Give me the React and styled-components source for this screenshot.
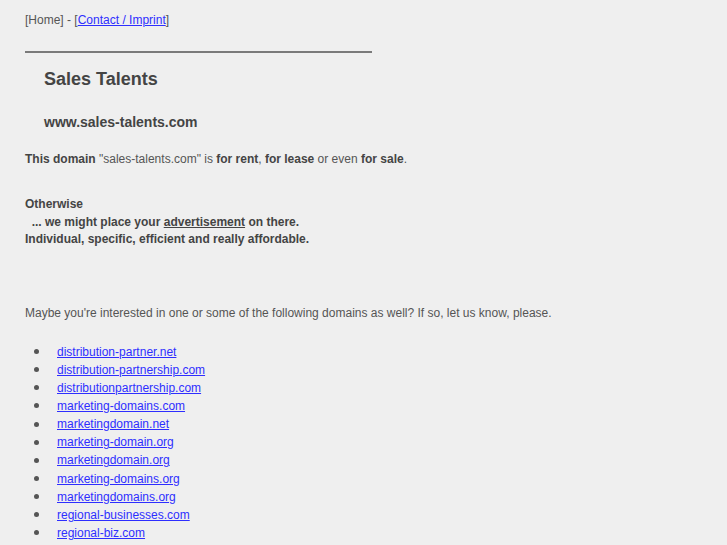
import React from "react";
import styled, { createGlobalStyle } from "styled-components";

const Global = createGlobalStyle`
  html, body { margin: 0; padding: 0; background: #efefef; }
  body { font-family: "Liberation Sans", Arial, sans-serif; font-size: 12px; color: #555; }
`;

const Page = styled.div`
  padding: 13px 25px 0 25px;
`;

const Nav = styled.div`
  line-height: 15px;
  color: #555;
`;

const Link = styled.a`
  color: #2e2eff;
  text-decoration: underline;
`;

const Rule = styled.div`
  width: 347px;
  height: 2px;
  background: #7a7a7a;
  margin-top: 23px;
`;

const Title = styled.h1`
  margin: 16px 0 0 19px;
  font-size: 18px;
  line-height: 20px;
  color: #444;
  font-weight: bold;
`;

const Subtitle = styled.h2`
  margin: 24px 0 0 19px;
  font-size: 14px;
  line-height: 18px;
  color: #444;
  font-weight: bold;
`;

const Para = styled.p`
  margin: ${(p) => p.$top}px 0 0 0;
  line-height: 18px;
  color: #555;
  b { color: #444; }
`;

const Notice = styled.div`
  margin-top: 28px;
  font-weight: bold;
  color: #444;
  line-height: 17.5px;
`;

const Ad = styled.span`
  text-decoration: underline;
`;

const List = styled.ul`
  margin: 21px 0 0 0;
  padding: 0;
  list-style: none;
`;

const Item = styled.li`
  display: flex;
  align-items: center;
  height: 18.15px;
  padding-left: 9px;
  &::before {
    content: "";
    width: 5px;
    height: 5px;
    border-radius: 50%;
    background: #555;
    margin-right: 18px;
    flex: none;
  }
`;

const domains = [
  "distribution-partner.net",
  "distribution-partnership.com",
  "distributionpartnership.com",
  "marketing-domains.com",
  "marketingdomain.net",
  "marketing-domain.org",
  "marketingdomain.org",
  "marketing-domains.org",
  "marketingdomains.org",
  "regional-businesses.com",
  "regional-biz.com",
];

export default function App() {
  return (
    <>
      <Global />
      <Page>
        <Nav>
          [Home] - [<Link href="#">Contact / Imprint</Link>]
        </Nav>
        <Rule />
        <Title>Sales Talents</Title>
        <Subtitle>www.sales-talents.com</Subtitle>
        <Para $top={19}>
          <b>This domain</b> "sales-talents.com" is <b>for rent</b>, <b>for lease</b> or even <b>for sale</b>.
        </Para>
        <Notice>
          Otherwise
          <br />
          &nbsp;&nbsp;... we might place your <Ad>advertisement</Ad> on there.
          <br />
          Individual, specific, efficient and really affordable.
        </Notice>
        <Para $top={55}>
          Maybe you're interested in one or some of the following domains as well? If so, let us know, please.
        </Para>
        <List>
          {domains.map((d) => (
            <Item key={d}>
              <Link href="#">{d}</Link>
            </Item>
          ))}
        </List>
      </Page>
    </>
  );
}
